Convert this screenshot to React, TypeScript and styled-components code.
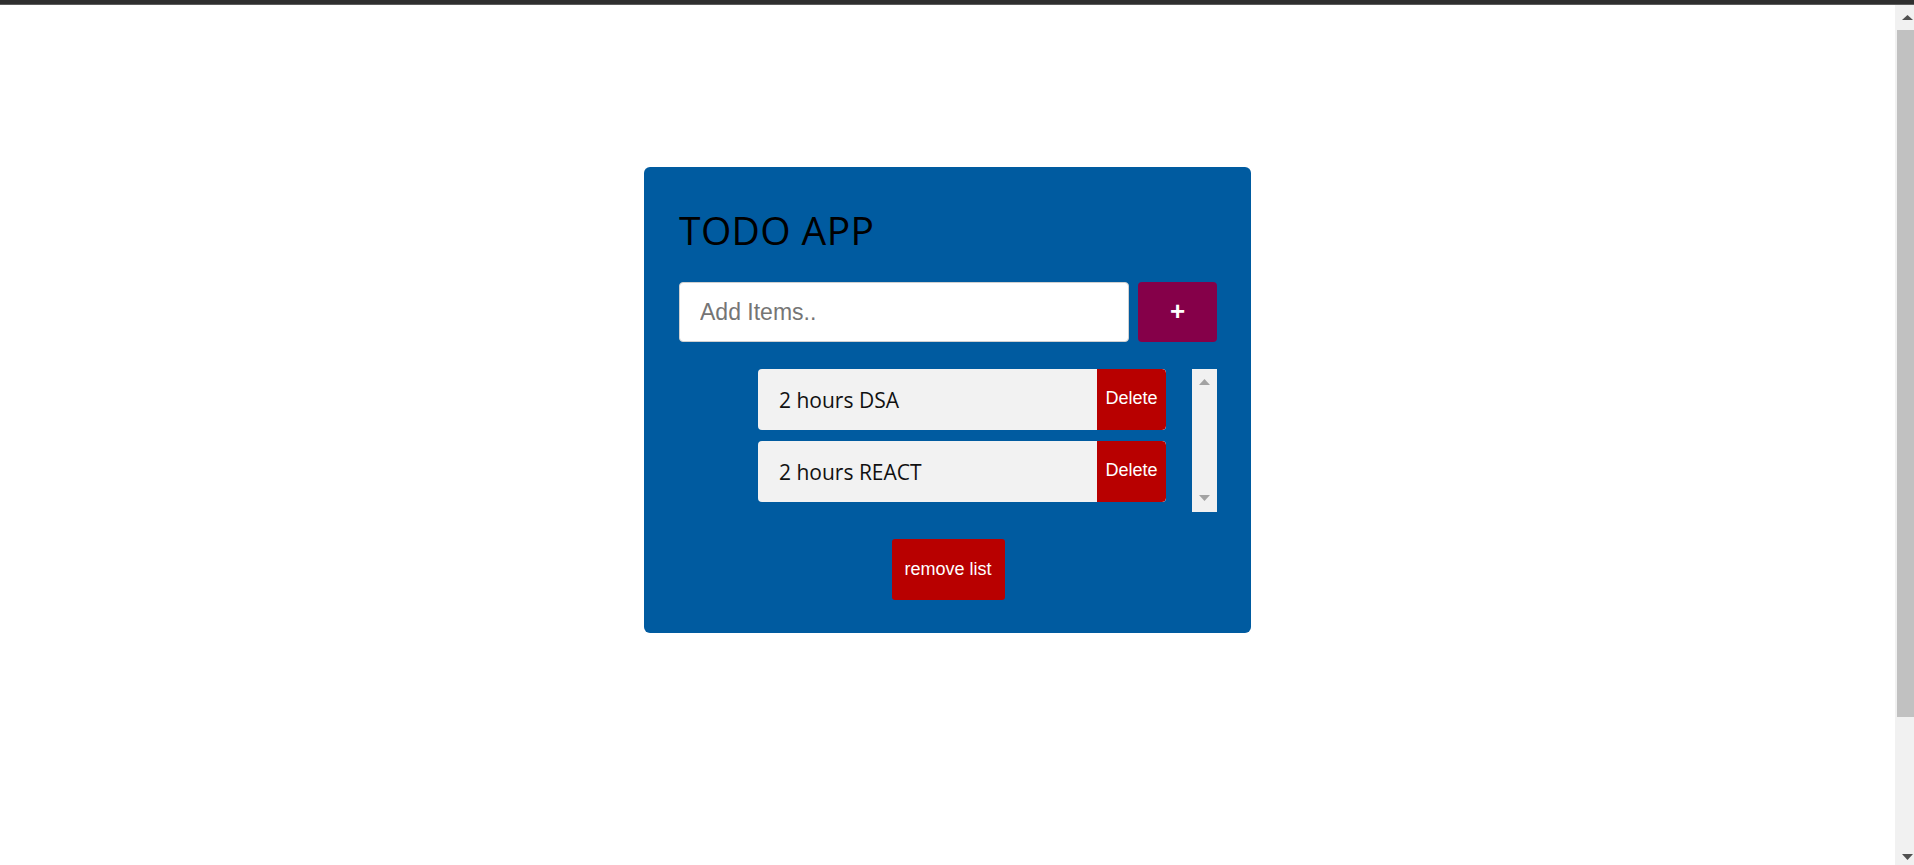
import React from "react";
import styled, { createGlobalStyle } from "styled-components";

const GlobalStyle = createGlobalStyle`
  html, body {
    margin: 0;
    padding: 0;
    height: 100%;
    overflow: hidden;
    background: #ffffff;
  }
  #root {
    height: 100%;
  }
`;

const Shell = styled.div`
  display: flex;
  flex-direction: column;
  height: 100vh;
`;

const TopBar = styled.div`
  flex: 0 0 auto;
  height: 4px;
  background: #2f2f2f;
  border-bottom: 1px solid #5c5c5c;
`;

const Body = styled.div`
  flex: 1 1 auto;
  display: flex;
  min-height: 0;
`;

const Main = styled.main`
  flex: 1 1 auto;
  overflow: hidden;
  padding-top: 162px;
  background: #ffffff;
`;

const PageScrollbar = styled.div`
  flex: 0 0 19px;
  display: flex;
  flex-direction: column;
  background: #f1f1f1;
`;

const ScrollButton = styled.div<{ $size: number }>`
  flex: 0 0 ${(p) => p.$size}px;
  display: flex;
`;

const PageTrack = styled.div`
  flex: 1 1 auto;
  padding-top: 8px;
`;

const PageThumb = styled.div`
  height: 687px;
  margin-left: 2px;
  background: #c1c1c1;
`;

const Card = styled.div`
  box-sizing: border-box;
  width: 607px;
  margin: 0 auto;
  padding: 37px 34px 33px 35px;
  background: #005ba0;
  border-radius: 6px;
  display: flex;
  flex-direction: column;
`;

const Title = styled.h1`
  margin: 0 0 26px;
  font-family: "Open Sans", "Noto Sans", sans-serif;
  font-size: 39px;
  font-weight: 500;
  letter-spacing: 0.4px;
  line-height: 52px;
  color: #000000;
`;

const InputRow = styled.div`
  display: flex;
  gap: 9px;
  height: 60px;
  margin-bottom: 27px;
`;

const ItemInput = styled.input`
  flex: 1 1 auto;
  min-width: 0;
  box-sizing: border-box;
  height: 60px;
  padding: 0 0 0 20px;
  border: 1px solid #d0d0d0;
  border-radius: 4px;
  background: #ffffff;
  font-family: "Liberation Sans", Arial, sans-serif;
  font-size: 23px;
  color: #222222;
  outline: none;

  &::placeholder {
    color: #757575;
  }
`;

const AddButton = styled.button`
  flex: 0 0 79px;
  height: 60px;
  border: none;
  border-radius: 4px;
  background: #850049;
  color: #ffffff;
  font-family: "Liberation Sans", Arial, sans-serif;
  font-size: 26px;
  font-weight: 700;
  line-height: 1;
  padding: 0 0 3px;
  cursor: pointer;
`;

const ListBox = styled.div`
  align-self: flex-end;
  width: 485px;
  height: 143px;
  margin-bottom: 27px;
  display: flex;
`;

const Items = styled.div`
  flex: 1 1 auto;
  display: flex;
  flex-direction: column;
  align-items: center;
  gap: 11px;
  overflow: hidden;
`;

const ListScrollbar = styled.div`
  flex: 0 0 25px;
  display: flex;
  flex-direction: column;
  justify-content: space-between;
  background: #f1f1f1;
`;

const Item = styled.div`
  flex: 0 0 61px;
  width: 408px;
  display: flex;
  align-items: stretch;
  background: #f2f2f2;
  border-radius: 4px;
  overflow: hidden;
`;

const ItemText = styled.span`
  flex: 1 1 auto;
  display: flex;
  align-items: center;
  padding-left: 21px;
  font-family: "Open Sans", "Noto Sans", sans-serif;
  font-size: 21px;
  color: #111111;
`;

const DeleteButton = styled.button`
  flex: 0 0 69px;
  border: none;
  border-radius: 0 4px 4px 0;
  background: #b80000;
  color: #ffffff;
  font-family: "Liberation Sans", Arial, sans-serif;
  font-size: 18px;
  padding: 0 0 2px;
  cursor: pointer;
`;

const RemoveButton = styled.button`
  align-self: center;
  width: 113px;
  height: 61px;
  border: none;
  border-radius: 3px;
  background: #b80000;
  color: #ffffff;
  font-family: "Liberation Sans", Arial, sans-serif;
  font-size: 18px;
  padding: 0;
  cursor: pointer;
`;

const Arrow = ({ w, h, points, fill }: { w: number; h: number; points: string; fill: string }) => (
  <svg width={w} height={h} viewBox={`0 0 ${w} ${h}`}>
    <polygon points={points} fill={fill} />
  </svg>
);

const items = ["2 hours DSA", "2 hours REACT"];

export default function App() {
  return (
    <>
      <GlobalStyle />
      <Shell>
        <TopBar />
        <Body>
          <Main>
            <Card>
              <Title>TODO APP</Title>
              <InputRow>
                <ItemInput placeholder="Add Items.." />
                <AddButton>+</AddButton>
              </InputRow>
              <ListBox>
                <Items>
                  {items.map((text) => (
                    <Item key={text}>
                      <ItemText>{text}</ItemText>
                      <DeleteButton>Delete</DeleteButton>
                    </Item>
                  ))}
                </Items>
                <ListScrollbar>
                  <ScrollButton $size={25}>
                    <Arrow w={25} h={25} points="7,16 12.5,10 18,16" fill="#a3a3a3" />
                  </ScrollButton>
                  <ScrollButton $size={25}>
                    <Arrow w={25} h={25} points="7,8 18,8 12.5,14" fill="#a3a3a3" />
                  </ScrollButton>
                </ListScrollbar>
              </ListBox>
              <RemoveButton>remove list</RemoveButton>
            </Card>
          </Main>
          <PageScrollbar>
            <ScrollButton $size={17}>
              <Arrow w={19} h={17} points="7,15 12.5,10 18,15" fill="#505050" />
            </ScrollButton>
            <PageTrack>
              <PageThumb />
            </PageTrack>
            <ScrollButton $size={17}>
              <Arrow w={19} h={17} points="7,6 18,6 12.5,12" fill="#505050" />
            </ScrollButton>
          </PageScrollbar>
        </Body>
      </Shell>
    </>
  );
}
